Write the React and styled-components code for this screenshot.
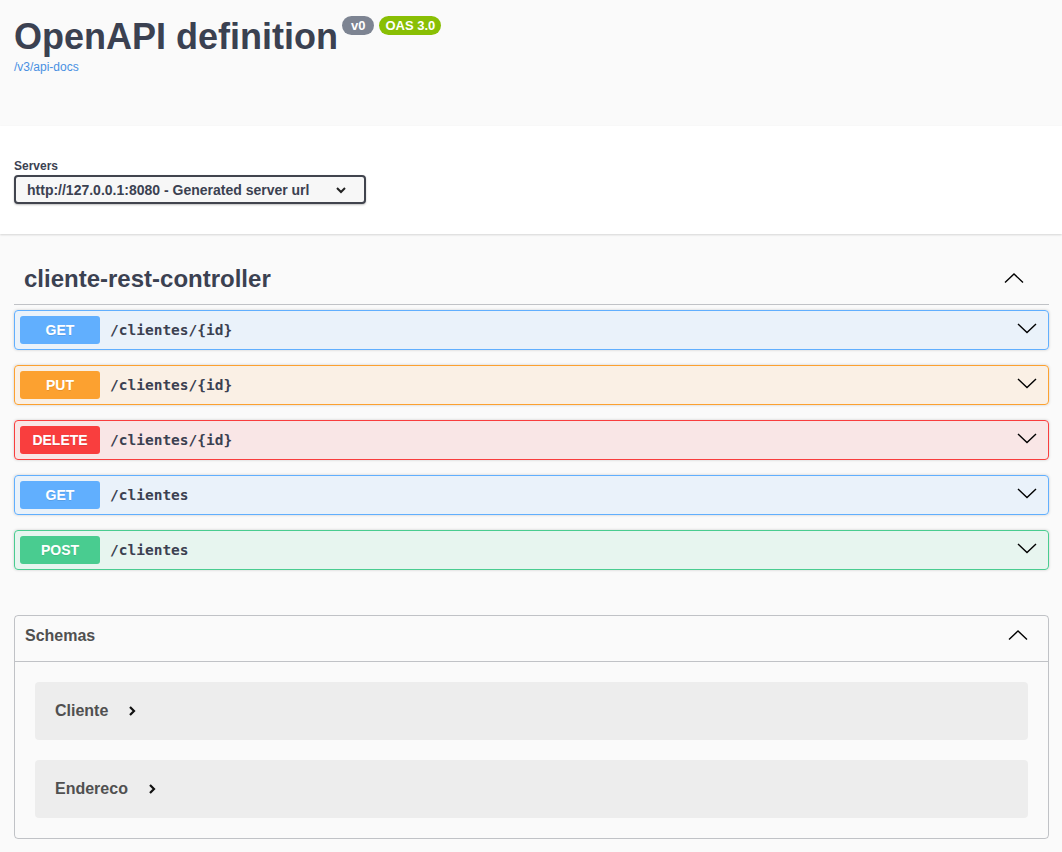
import React from "react";
import styled, { createGlobalStyle } from "styled-components";

const Global = createGlobalStyle`
  html, body { margin: 0; padding: 0; background: #fafafa; }
  body { font-family: "Liberation Sans", Arial, sans-serif; color: #3b4151; }
  * { box-sizing: border-box; }
`;

const Wrapper = styled.div`
  padding: 0 13px 0 14px;
`;

const Info = styled.div`
  height: 126px;
  padding-top: 16px;
`;

const TitleRow = styled.div`
  display: flex;
  align-items: flex-start;
`;

const Title = styled.h2`
  margin: 0;
  font-size: 36px;
  line-height: 41px;
  font-weight: 700;
  color: #3b4151;
`;

const Pill = styled.span`
  display: inline-flex;
  align-items: center;
  justify-content: center;
  height: 19px;
  padding: 0 ${(p) => p.$pad || 6}px;
  margin-left: ${(p) => p.$ml}px;
  border-radius: 10px;
  background: ${(p) => p.$bg};
  color: #fff;
  font-size: 13px;
  font-weight: 700;
`;

const DocLink = styled.a`
  display: block;
  margin-top: 3px;
  font-size: 12px;
  line-height: 14px;
  color: #4990e2;
  text-decoration: none;
`;

const SchemeContainer = styled.section`
  background: #fff;
  box-shadow: 0 1px 2px 0 rgba(0, 0, 0, 0.15);
  padding: 30px 13px 30px 14px;
  margin: 0 -13px 20px -14px;
`;

const Label = styled.div`
  font-size: 12px;
  font-weight: 700;
  line-height: 14px;
  margin-top: 3px;
  margin-bottom: 2px;
  color: #3b4151;
`;

const Select = styled.div`
  width: 352px;
  height: 29px;
  display: flex;
  align-items: center;
  justify-content: space-between;
  padding: 0 17px 0 11px;
  border: 2px solid #41444e;
  border-radius: 4px;
  background: #f7f7f7;
  box-shadow: 0 1px 2px 0 rgba(0, 0, 0, 0.25);
  font-size: 14px;
  font-weight: 700;
  color: #3b4151;
`;

const TagHeading = styled.h3`
  margin: 0;
  height: 51px;
  display: flex;
  align-items: center;
  justify-content: space-between;
  padding: 0 25px 0 10px;
  border-bottom: 1px solid rgba(59, 65, 81, 0.3);
  font-size: 24px;
  font-weight: 700;
  color: #3b4151;
`;

const Ops = styled.div`
  display: flex;
  flex-direction: column;
  gap: 15px;
  margin-top: 5px;
`;

const colors = {
  GET: "#61affe",
  PUT: "#fca130",
  DELETE: "#f93e3e",
  POST: "#49cc90",
};

const Opblock = styled.div`
  height: 40px;
  display: flex;
  align-items: center;
  padding: 0 11px 0 5px;
  border: 1px solid ${(p) => p.$c};
  border-radius: 4px;
  background: ${(p) => p.$c}1a;
  box-shadow: 0 0 3px rgba(0, 0, 0, 0.19);
`;

const Method = styled.span`
  width: 80px;
  height: 28px;
  display: flex;
  align-items: center;
  justify-content: center;
  border-radius: 3px;
  background: ${(p) => p.$c};
  color: #fff;
  font-size: 14px;
  font-weight: 700;
  text-shadow: 0 1px 0 rgba(0, 0, 0, 0.1);
`;

const Path = styled.span`
  flex: 1;
  padding-left: 10px;
  font-family: "DejaVu Sans Mono", "Liberation Mono", monospace;
  font-size: 14.5px;
  font-weight: 700;
  color: #3b4151;
`;

const Models = styled.section`
  margin-top: 45px;
  margin-bottom: 14px;
  border: 1px solid rgba(59, 65, 81, 0.3);
  border-radius: 4px;
`;

const ModelsHeader = styled.h4`
  margin: 0;
  height: 46px;
  display: flex;
  align-items: center;
  justify-content: space-between;
  padding: 0 20px 5px 10px;
  border-bottom: 1px solid rgba(59, 65, 81, 0.3);
  font-size: 16px;
  font-weight: 700;
  color: #505050;
`;

const ModelList = styled.div`
  display: flex;
  flex-direction: column;
  gap: 20px;
  padding: 20px 20px;
`;

const ModelContainer = styled.div`
  height: 58px;
  display: flex;
  align-items: center;
  gap: 20px;
  padding: 0 20px;
  border-radius: 4px;
  background: rgba(0, 0, 0, 0.05);
  font-size: 16px;
  font-weight: 700;
  color: #505050;
`;

const Chevron = ({ dir = "down" }) => {
  const pts = {
    down: "1,4 10,12.5 19,4",
    up: "1,13.5 10,5 19,13.5",
  }[dir];
  return (
    <svg width={20} height={20} viewBox="0 0 20 20" fill="none">
      <polyline points={pts} stroke="#000" strokeWidth={1.4} strokeLinejoin="miter" />
    </svg>
  );
};

const SmallChevron = ({ dir }) =>
  dir === "right" ? (
    <svg width="8" height="12" viewBox="0 0 8 12" fill="none">
      <polyline points="2,2 6,6 2,10" stroke="#111" strokeWidth="2.2" />
    </svg>
  ) : (
    <svg width="12" height="8" viewBox="0 0 12 8" fill="none">
      <polyline points="2,2 6,6 10,2" stroke="#222" strokeWidth="2" />
    </svg>
  );

const ops = [
  ["GET", "/clientes/{id}"],
  ["PUT", "/clientes/{id}"],
  ["DELETE", "/clientes/{id}"],
  ["GET", "/clientes"],
  ["POST", "/clientes"],
];

export default function App() {
  return (
    <>
      <Global />
      <Wrapper>
        <Info>
          <TitleRow>
            <Title>OpenAPI definition</Title>
            <Pill $bg="#7d8492" $ml={4} $pad={9}>v0</Pill>
            <Pill $bg="#89bf04" $ml={5} $pad={6}>OAS 3.0</Pill>
          </TitleRow>
          <DocLink href="#">/v3/api-docs</DocLink>
        </Info>
        <SchemeContainer>
          <Label>Servers</Label>
          <Select>
            <span>http://127.0.0.1:8080 - Generated server url</span>
            <SmallChevron dir="down" />
          </Select>
        </SchemeContainer>
        <TagHeading>
          <span>cliente-rest-controller</span>
          <Chevron dir="up" />
        </TagHeading>
        <Ops>
          {ops.map(([m, p], i) => (
            <Opblock key={i} $c={colors[m]}>
              <Method $c={colors[m]}>{m}</Method>
              <Path>{p}</Path>
              <Chevron dir="down" />
            </Opblock>
          ))}
        </Ops>
        <Models>
          <ModelsHeader>
            <span>Schemas</span>
            <Chevron dir="up" />
          </ModelsHeader>
          <ModelList>
            <ModelContainer>
              <span>Cliente</span>
              <SmallChevron dir="right" />
            </ModelContainer>
            <ModelContainer>
              <span>Endereco</span>
              <SmallChevron dir="right" />
            </ModelContainer>
          </ModelList>
        </Models>
      </Wrapper>
    </>
  );
}
